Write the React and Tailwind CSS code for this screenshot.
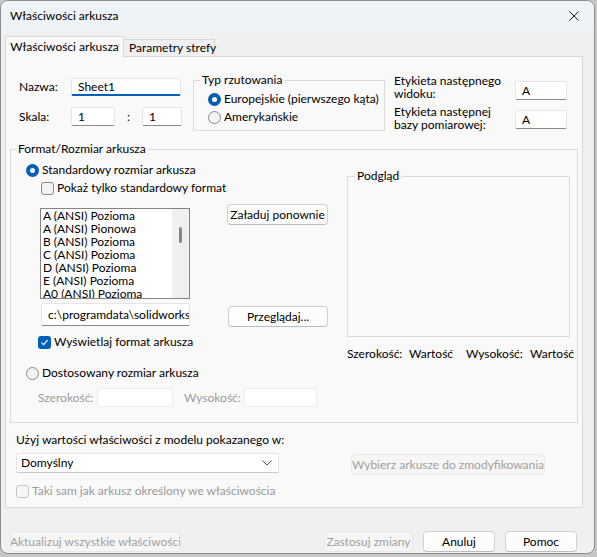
import React from "react";

const FONT = { fontFamily: 'Lato, "Noto Sans", sans-serif' };

function Radio({ checked }) {
  return checked ? (
    <span className="w-[13px] h-[13px] shrink-0 rounded-full bg-[#005fb8] flex items-center justify-center">
      <span className="w-[5px] h-[5px] rounded-full bg-white" />
    </span>
  ) : (
    <span className="w-[13px] h-[13px] shrink-0 rounded-full border border-[#8a8a8a] bg-[#f3f3f3]" />
  );
}

function Check({ checked, disabled }) {
  if (checked)
    return (
      <span className="w-[13px] h-[13px] shrink-0 rounded-[3px] bg-[#005fb8] flex items-center justify-center">
        <svg width="9" height="9" viewBox="0 0 9 9">
          <path d="M1.5 4.6 L3.6 6.6 L7.6 2.2" fill="none" stroke="white" strokeWidth="1.2" />
        </svg>
      </span>
    );
  return (
    <span
      className={
        "w-[13px] h-[13px] shrink-0 rounded-[3px] border " +
        (disabled ? "border-[#c5c5c5] bg-[#f7f7f7]" : "border-[#8a8a8a] bg-[#f3f3f3]")
      }
    />
  );
}

function Btn({ children, className = "", disabled }) {
  return (
    <div
      className={
        "h-[21px] shrink-0 rounded-[4px] border flex items-center justify-center text-[12px] whitespace-nowrap overflow-hidden " +
        (disabled
          ? "border-[#e8e8e8] bg-[#f6f6f6] text-[#a0a0a0] "
          : "border-[#d0d0d0] border-b-[#bdbdbd] bg-[#fdfdfd] text-black ") +
        className
      }
    >
      {children}
    </div>
  );
}

function Field({ children, className = "", focused, disabled }) {
  return (
    <div
      className={
        "shrink-0 bg-white rounded-[2px] border flex items-center px-[6px] text-[12px] overflow-hidden whitespace-nowrap " +
        (disabled
          ? "border-[#ececec] bg-[#f9f9f9] "
          : focused
          ? "border-[#e5e5e5] border-b-2 border-b-[#005fb8] "
          : "border-[#e5e5e5] border-b-[#8a8a8a] ") +
        className
      }
    >
      {children}
    </div>
  );
}

export default function App() {
  const items = [
    "A (ANSI) Pozioma",
    "A (ANSI) Pionowa",
    "B (ANSI) Pozioma",
    "C (ANSI) Pozioma",
    "D (ANSI) Pozioma",
    "E (ANSI) Pozioma",
    "A0 (ANSI) Pozioma",
  ];
  return (
    <div className="w-[597px] h-[557px] bg-[#c6c6c6] overflow-hidden" style={FONT}>
      <div className="w-[595px] h-[554px] rounded-[8px] border border-[#8c8c8c] bg-[#f0f0f0] overflow-hidden flex flex-col text-[12px] text-black leading-[16px] whitespace-nowrap">
        {/* title bar */}
        <div className="h-[29px] shrink-0 bg-[#eef3f8] flex items-center justify-between pl-[9px] pr-[15px]">
          <span className="text-[12px]">Właściwości arkusza</span>
          <svg width="10" height="10" viewBox="0 0 10 10">
            <path d="M0.5 0.5 L9.5 9.5 M9.5 0.5 L0.5 9.5" stroke="#1a1a1a" strokeWidth="1" />
          </svg>
        </div>

        {/* tabs */}
        <div className="flex items-end h-[20px] mt-[6px] ml-[4px] relative z-10">
          <div className="w-[119px] h-[21px] -mb-px border border-b-0 border-[#d9d9d9] bg-[#f9f9f9] flex items-center justify-center">
            Właściwości arkusza
          </div>
          <div className="w-[91px] h-[17px] border border-l-0 border-b-0 border-[#d9d9d9] bg-[#f0f0f0] flex items-center pl-[5px]">
            Parametry strefy
          </div>
        </div>

        {/* panel */}
        <div className="ml-[4px] w-[578px] h-[452px] border border-[#d9d9d9] bg-[#f9f9f9] flex flex-col">
          {/* top section */}
          <div className="flex items-start mt-[15px]">
            <div className="ml-[13px] w-[163px] mt-[6px] flex flex-col">
              <div className="flex items-center h-[18px]">
                <span className="w-[52px]">Nazwa:</span>
                <Field focused className="w-[110px] h-[18px]">Sheet1</Field>
              </div>
              <div className="flex items-center h-[19px] mt-[11px]">
                <span className="w-[52px]">Skala:</span>
                <Field className="w-[44px] h-[19px]">1</Field>
                <span className="w-[27px] text-center">:</span>
                <Field className="w-[40px] h-[19px]">1</Field>
              </div>
            </div>

            <fieldset className="ml-[11px] w-[192px] h-[59px] border border-[#dcdcdc]">
              <legend className="ml-[6px] px-[2px] leading-[16px]">Typ rzutowania</legend>
              <div className="pl-[14px] pt-[3px] flex flex-col gap-[2px]">
                <div className="flex items-center gap-[3px] h-[16px]">
                  <Radio checked />
                  <span>Europejskie (pierwszego kąta)</span>
                </div>
                <div className="flex items-center gap-[3px] h-[16px]">
                  <Radio />
                  <span>Amerykańskie</span>
                </div>
              </div>
            </fieldset>

            <div className="ml-[9px] mt-[2px] flex flex-col">
              <div className="flex items-start">
                <span className="w-[121px] leading-[13px]">
                  Etykieta następnego
                  <br />
                  widoku:
                </span>
                <Field className="w-[52px] h-[19px] mt-[7px]">A</Field>
              </div>
              <div className="flex items-start mt-[5px]">
                <span className="w-[121px] leading-[13px]">
                  Etykieta następnej
                  <br />
                  bazy pomiarowej:
                </span>
                <Field className="w-[52px] h-[19px] mt-[5px]">A</Field>
              </div>
            </div>
          </div>

          {/* Format / Rozmiar arkusza */}
          <fieldset className="mt-[10px] ml-[4px] w-[568px] border border-[#dcdcdc]">
            <legend className="ml-[5px] px-[2px] leading-[16px]">Format/Rozmiar arkusza</legend>
            <div className="flex items-start pl-[15px] pt-[5px] pb-[15px]">
              {/* left column */}
              <div className="w-[302px] flex flex-col">
                <div className="flex items-center gap-[3px] h-[16px]">
                  <Radio checked />
                  <span>Standardowy rozmiar arkusza</span>
                </div>
                <div className="flex items-center gap-[3px] h-[16px] mt-[2px] ml-[15px]">
                  <Check />
                  <span>Pokaż tylko standardowy format</span>
                </div>
                <div className="flex items-start mt-[8px]">
                  <div className="ml-[14px] mt-[4px] w-[150px] h-[91px] border border-[#848484] bg-white flex overflow-hidden">
                    <div className="flex-1 pl-[2px] overflow-hidden">
                      {items.map((t) => (
                        <div key={t} className="h-[13px] leading-[13px] whitespace-nowrap">
                          {t}
                        </div>
                      ))}
                    </div>
                    <div className="w-[17px] bg-[#f0f0f0] flex justify-center pt-[18px]">
                      <div className="w-[3px] h-[16px] rounded-full bg-[#858585]" />
                    </div>
                  </div>
                  <Btn className="ml-[37px] w-[101px]">Załaduj ponownie</Btn>
                </div>
                <div className="flex items-start mt-[4px]">
                  <Field className="ml-[15px] w-[149px] h-[23px]">c:\programdata\solidworks\</Field>
                  <Btn className="ml-[38px] mt-[3px] w-[100px]">Przeglądaj...</Btn>
                </div>
                <div className="flex items-center gap-[3px] h-[16px] mt-[7px] ml-[12px]">
                  <Check checked />
                  <span>Wyświetlaj format arkusza</span>
                </div>
                <div className="flex items-center gap-[3px] h-[16px] mt-[15px]">
                  <Radio />
                  <span>Dostosowany rozmiar arkusza</span>
                </div>
                <div className="flex items-center mt-[7px] ml-[12px] h-[19px] text-[#9a9a9a]">
                  <span className="w-[59px]">Szerokość:</span>
                  <Field disabled className="w-[76px] h-[19px]" />
                  <span className="ml-[11px] w-[60px]">Wysokość:</span>
                  <Field disabled className="w-[73px] h-[19px]" />
                </div>
              </div>

              {/* right column */}
              <div className="ml-[19px] mt-[6px] flex flex-col">
                <fieldset className="w-[223px] h-[169px] border border-[#dcdcdc]">
                  <legend className="ml-[7px] px-[2px] leading-[16px]">Podgląd</legend>
                </fieldset>
                <div className="flex items-center h-[16px] mt-[9px] whitespace-nowrap">
                  <span className="w-[62px]">Szerokość:</span>
                  <span className="w-[57px]">Wartość</span>
                  <span className="w-[64px]">Wysokość:</span>
                  <span>Wartość</span>
                </div>
              </div>
            </div>
          </fieldset>

          <div className="ml-[10px] mt-[9px] h-[16px] flex items-center">
            Użyj wartości właściwości z modelu pokazanego w:
          </div>
          <div className="flex items-start mt-[5px] ml-[10px]">
            <div className="w-[263px] h-[20px] bg-white border border-[#e5e5e5] border-b-[#c8c8c8] rounded-[2px] flex items-center justify-between pl-[4px] pr-[6px]">
              <span>Domyślny</span>
              <svg width="10" height="6" viewBox="0 0 10 6">
                <path d="M0.5 0.5 L5 5 L9.5 0.5" fill="none" stroke="#555" strokeWidth="1" />
              </svg>
            </div>
            <Btn disabled className="ml-[72px] mt-[1px] w-[194px] h-[20px]">
              Wybierz arkusze do zmodyfikowania
            </Btn>
          </div>
          <div className="ml-[10px] mt-[8px] w-[260px] h-[16px] flex items-center gap-[3px] overflow-hidden whitespace-nowrap text-[#9a9a9a]">
            <Check disabled />
            <span>Taki sam jak arkusz określony we właściwościach</span>
          </div>
        </div>

        {/* bottom buttons */}
        <div className="flex items-center mt-[23px] ml-[9px]">
          <Btn disabled className="w-[171px]">Aktualizuj wszystkie właściwości</Btn>
          <Btn disabled className="ml-[143px] w-[89px]">Zastosuj zmiany</Btn>
          <Btn className="ml-[10px] w-[72px]">Anuluj</Btn>
          <Btn className="ml-[10px] w-[72px]">Pomoc</Btn>
        </div>
      </div>
    </div>
  );
}
